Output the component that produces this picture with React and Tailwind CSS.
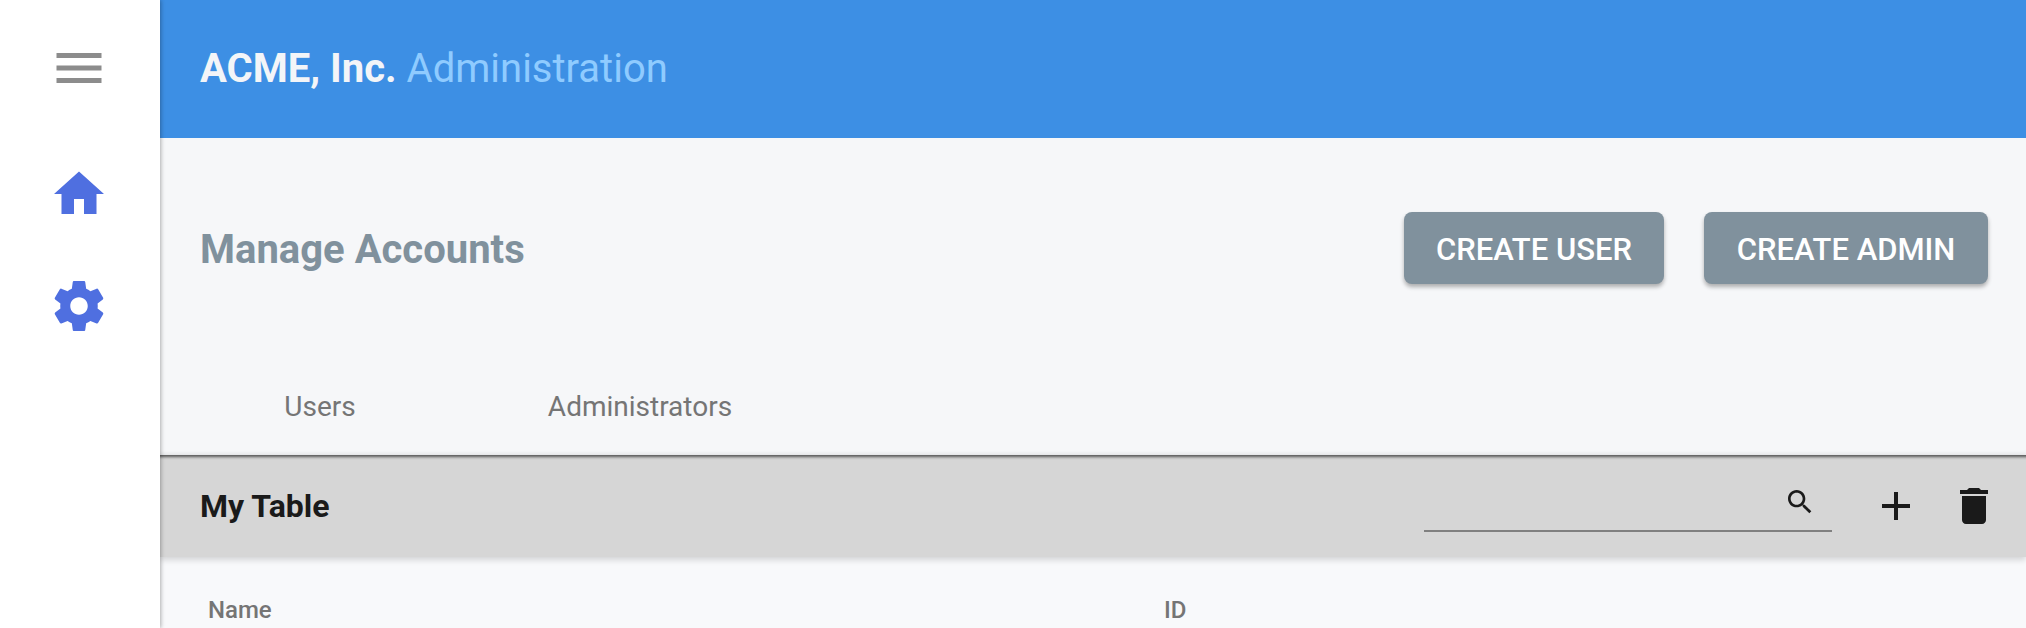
import React from 'react'

const roboto = { fontFamily: 'Roboto, sans-serif' }

function Icon({ d, className }) {
  return (
    <svg viewBox="0 0 24 24" className={className} fill="currentColor">
      <path d={d} />
    </svg>
  )
}

const menuPath = 'M3 18h18v-2H3v2zm0-5h18v-2H3v2zm0-7v2h18V6H3z'
const homePath = 'M10 20v-6h4v6h5v-8h3L12 3 2 12h3v8z'
const settingsPath =
  'M19.43 12.98c.04-.32.07-.64.07-.98s-.03-.66-.07-.98l2.11-1.65c.19-.15.24-.42.12-.64l-2-3.46c-.12-.22-.39-.3-.61-.22l-2.49 1c-.52-.4-1.08-.73-1.69-.98l-.38-2.65C14.46 2.18 14.25 2 14 2h-4c-.25 0-.46.18-.49.42l-.38 2.65c-.61.25-1.17.59-1.69.98l-2.49-1c-.23-.09-.49 0-.61.22l-2 3.46c-.13.22-.07.49.12.64l2.11 1.65c-.04.32-.07.65-.07.98s.03.66.07.98l-2.11 1.65c-.19.15-.24.42-.12.64l2 3.46c.12.22.39.3.61.22l2.49-1c.52.4 1.08.73 1.69.98l.38 2.65c.03.24.24.42.49.42h4c.25 0 .46-.18.49-.42l.38-2.65c.61-.25 1.17-.59 1.69-.98l2.49 1c.23.09.49 0 .61-.22l2-3.46c.12-.22.07-.49-.12-.64l-2.11-1.65zM12 15.5c-1.93 0-3.5-1.57-3.5-3.5s1.57-3.5 3.5-3.5 3.5 1.57 3.5 3.5-1.57 3.5-3.5 3.5z'
const searchPath =
  'M15.5 14h-.79l-.28-.27C15.41 12.59 16 11.11 16 9.5 16 5.91 13.09 3 9.5 3S3 5.91 3 9.5 5.91 16 9.5 16c1.61 0 3.09-.59 4.23-1.57l.27.28v.79l5 4.99L20.49 19l-4.99-5zm-6 0C7.01 14 5 11.99 5 9.5S7.01 5 9.5 5 14 7.01 14 9.5 11.99 14 9.5 14z'
const addPath = 'M19 13h-6v6h-2v-6H5v-2h6V5h2v6h6v2z'
const deletePath = 'M6 19c0 1.1.9 2 2 2h8c1.1 0 2-.9 2-2V7H6v12zM19 4h-3.5l-1-1h-5l-1 1H5v2h14V4z'

function ActionButton({ children, className }) {
  return (
    <button className={`h-[72px] rounded-lg bg-[#80919d] pt-[5px] text-[31px] font-medium text-white shadow-[0_3px_4px_rgba(0,0,0,0.3)] ${className}`}>
      {children}
    </button>
  )
}

export default function App() {
  return (
    <div className="flex h-screen overflow-hidden bg-white" style={roboto}>
      <aside className="z-20 flex w-[160px] shrink-0 flex-col items-center bg-white pr-[2px] pt-[38px] shadow-[1px_0_4px_rgba(0,0,0,0.3)]">
        <Icon d={menuPath} className="h-[60px] w-[60px] text-[#8c8c8c]" />
        <Icon d={homePath} className="mt-[66px] h-[60px] w-[60px] text-[#4f6fe0]" />
        <Icon d={settingsPath} className="mt-[52px] h-[60px] w-[60px] text-[#4f6fe0]" />
      </aside>

      <main className="flex min-w-0 flex-1 flex-col bg-[#f6f7f9]">
        <header className="flex h-[138px] shrink-0 items-center bg-[#3d8fe4] pl-[40px] text-[40px]">
          <span className="font-bold text-[#f3f5f8]">ACME, Inc.</span>
          <span className="ml-[10px] text-[#8fcbff]">Administration</span>
        </header>

        <div className="flex h-[220px] shrink-0 items-center justify-between pl-[40px] pr-[38px]">
          <h1 className="pt-[3px] text-[40px] font-bold text-[#80919d]">Manage Accounts</h1>
          <div className="flex gap-[40px]">
            <ActionButton className="w-[260px]">CREATE USER</ActionButton>
            <ActionButton className="w-[284px]">CREATE ADMIN</ActionButton>
          </div>
        </div>

        <div className="flex h-[97px] shrink-0 text-[28px] text-[#757575] shadow-[inset_0_-5px_4px_-3px_rgba(0,0,0,0.06)]">
          <div className="flex w-[320px] items-center justify-center">Users</div>
          <div className="flex w-[320px] items-center justify-center">Administrators</div>
        </div>

        <section className="z-[5] flex h-[102px] shrink-0 items-center bg-[#d6d6d6] pl-[40px] pr-[28px] shadow-[inset_0_5px_3px_-3px_rgba(0,0,0,0.6),0_3px_6px_rgba(0,0,0,0.15)]">
          <h2 className="flex-1 text-[32px] font-bold text-[#1a1a1a]">My Table</h2>
          <div className="mt-[6px] flex w-[408px] justify-end border-b-2 border-[#808080] pb-[12px] pr-[16px]">
            <Icon d={searchPath} className="h-[32px] w-[32px] text-[#1a1a1a]" />
          </div>
          <Icon d={addPath} className="ml-[40px] h-[48px] w-[48px] text-[#1a1a1a]" />
          <Icon d={deletePath} className="ml-[30px] h-[48px] w-[48px] text-[#1a1a1a]" />
        </section>

        <div className="flex flex-1 bg-[#f8f9fb] pl-[48px] pt-[35px] text-[24px] font-medium text-[#757575]">
          <div className="w-[956px]">Name</div>
          <div>ID</div>
        </div>
      </main>
    </div>
  )
}
